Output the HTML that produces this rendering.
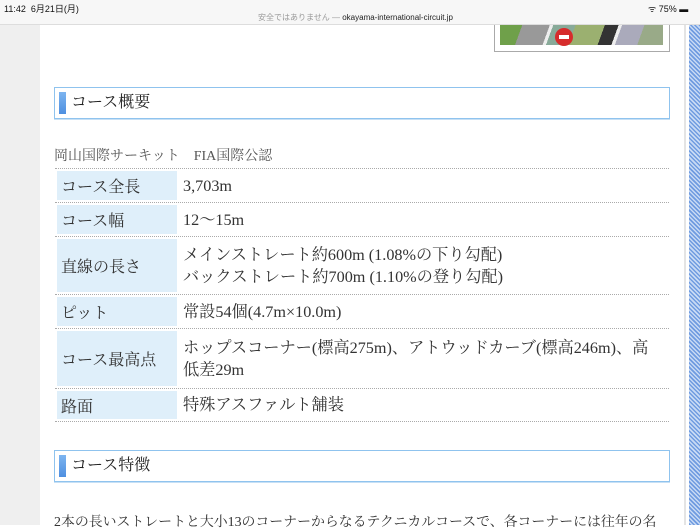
<!DOCTYPE html>
<html><head><meta charset="utf-8"><style>
*{margin:0;padding:0;box-sizing:border-box}
body{width:700px;height:525px;overflow:hidden;background:#fff;position:relative;font-family:"Liberation Serif","Noto Serif CJK SC",serif;color:#333}
.a{position:absolute}
.left{left:0;top:0;width:40px;height:525px;background:#efefef}
.rs{left:684px;top:0;width:2px;height:525px;background:#e4e4e4}
.hatch{left:689px;top:0;width:11px;height:525px;background:repeating-linear-gradient(45deg,#6f9be0 0 1.5px,#c8daf4 1.5px 3px)}
.bar{left:0;top:0;width:700px;height:25px;background:#f7f7f7;border-bottom:1px solid #ddd;font-family:"Liberation Sans","Noto Sans CJK JP",sans-serif}
.h{left:54px;width:616px;height:32px;border:1px solid #8fc3ee;box-shadow:0 1px 0 #c7e0f5;font-size:16px;line-height:30px;padding-left:16px;color:#222}
.h:before{content:"";position:absolute;left:4px;top:4px;width:7px;height:22px;background:linear-gradient(#7db5f0,#4e8fe0)}
.row{left:55px;width:614px;border-bottom:1px dotted #aaa}
.th{position:absolute;left:2px;top:2px;bottom:2px;width:120px;background:#dfeffa;font-size:16px;padding-left:4px;display:flex;align-items:center}
.td{position:absolute;left:128px;top:0;bottom:0;font-size:16.2px;line-height:22px;display:flex;align-items:center}
</style></head><body>
<div class="a left"></div>
<div class="a rs"></div>
<div class="a hatch"></div>
<div class="a" style="left:494px;top:20px;width:176px;height:32px;border:1px solid #aaa;border-top:none;background:#fff"></div>
<div class="a" style="left:500px;top:20px;width:163px;height:25px;background:linear-gradient(110deg,#6fa04a 0 14%,#999 14% 30%,#eee 30% 32%,#8a9 32% 45%,#9bb070 45% 62%,#333 62% 70%,#eee 70% 72%,#aab 72% 85%,#9a8 85%)"></div>
<div class="a" style="left:555px;top:28px;width:18px;height:18px;border-radius:50%;background:#d62c2c"><div class="a" style="left:4px;top:7px;width:10px;height:4px;background:#fff"></div></div>
<div class="a bar"><span class="a" style="left:4px;top:2px;font-size:9px;color:#111">11:42&nbsp; 6月21日(月)</span><span class="a" style="left:258px;top:12px;font-size:8px;color:#999;white-space:nowrap">安全ではありません — <span style="color:#222">okayama-international-circuit.jp</span></span><span class="a" style="left:648px;top:2px;font-size:9px;color:#111">ᯤ 75% ▬</span></div>
<div class="a h" style="top:87px">コース概要</div>
<div class="a" style="left:54px;top:145px;font-size:14px;color:#555;white-space:nowrap">岡山国際サーキット　FIA国際公認</div>
<div class="a row" style="top:168px;height:1px"></div>
<div class="a row" style="top:169px;height:34px"><div class="th">コース全長</div><div class="td">3,703m</div></div>
<div class="a row" style="top:203px;height:34px"><div class="th">コース幅</div><div class="td">12〜15m</div></div>
<div class="a row" style="top:237px;height:58px"><div class="th">直線の長さ</div><div class="td" style="white-space:nowrap">メインストレート約600m (1.08%の下り勾配)<br>バックストレート約700m (1.10%の登り勾配)</div></div>
<div class="a row" style="top:295px;height:34px"><div class="th">ピット</div><div class="td">常設54個(4.7m×10.0m)</div></div>
<div class="a row" style="top:329px;height:60px"><div class="th">コース最高点</div><div class="td" style="width:486px;white-space:nowrap">ホップスコーナー(標高275m)、アトウッドカーブ(標高246m)、高<br>低差29m</div></div>
<div class="a row" style="top:389px;height:33px"><div class="th">路面</div><div class="td">特殊アスファルト舗装</div></div>
<div class="a h" style="top:450px">コース特徴</div>
<div class="a" style="left:54px;top:510px;font-size:13.9px;white-space:nowrap">2本の長いストレートと大小13のコーナーからなるテクニカルコースで、各コーナーには往年の名</div>
</body></html>
